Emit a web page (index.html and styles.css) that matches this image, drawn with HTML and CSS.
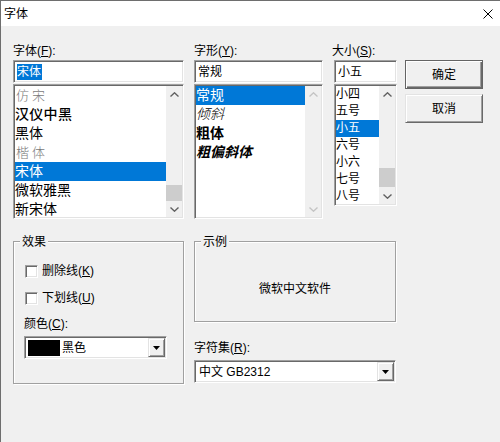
FILE: index.html
```html
<!DOCTYPE html>
<html lang="zh-CN">
<head>
<meta charset="utf-8">
<title>字体</title>
<link rel="stylesheet" href="styles.css">
</head>
<body>
<div class="window">
  <div class="titlebar">
    <span class="title">字体</span>
    <svg class="close" width="10" height="10" viewBox="0 0 10 10"><path d="M0.5 0.5L9.5 9.5M9.5 0.5L0.5 9.5" stroke="#000" stroke-width="1" fill="none"/></svg>
  </div>

  <div class="client">
    <div class="top">
      <!-- 字体 -->
      <div class="col col-font">
        <div class="lbl">字体(<u>F</u>):</div>
        <div class="edit sunken"><span class="sel">宋体</span></div>
        <div class="list list-tall sunken">
          <ul class="items">
            <li class="fang">仿宋</li>
            <li class="heavy">汉仪中黑</li>
            <li>黑体</li>
            <li class="kai">楷体</li>
            <li class="on">宋体</li>
            <li>微软雅黑</li>
            <li>新宋体</li>
          </ul>
          <div class="sbar">
            <div class="sbtn"><svg width="9" height="5" viewBox="0 0 9 5"><polyline points="0.5,4.5 4.5,0.8 8.5,4.5" fill="none" stroke="#606060" stroke-width="1.4"/></svg></div>
            <div class="track"><div class="thumb" style="margin-top:83px;height:16px"></div></div>
            <div class="sbtn"><svg width="9" height="5" viewBox="0 0 9 5"><polyline points="0.5,0.5 4.5,4.2 8.5,0.5" fill="none" stroke="#606060" stroke-width="1.4"/></svg></div>
          </div>
        </div>
      </div>

      <!-- 字形 -->
      <div class="col col-style">
        <div class="lbl">字形(<u>Y</u>):</div>
        <div class="edit sunken">常规</div>
        <div class="list list-tall sunken">
          <ul class="items">
            <li class="on">常规</li>
            <li class="it thin">倾斜</li>
            <li class="bd">粗体</li>
            <li class="bd it">粗偏斜体</li>
          </ul>
          <div class="sbar">
            <div class="sbtn"><svg width="9" height="5" viewBox="0 0 9 5"><polyline points="0.5,4.5 4.5,0.8 8.5,4.5" fill="none" stroke="#c4c4c4" stroke-width="1.4"/></svg></div>
            <div class="track"></div>
            <div class="sbtn"><svg width="9" height="5" viewBox="0 0 9 5"><polyline points="0.5,0.5 4.5,4.2 8.5,0.5" fill="none" stroke="#c4c4c4" stroke-width="1.4"/></svg></div>
          </div>
        </div>
      </div>

      <!-- 大小 -->
      <div class="col col-size">
        <div class="lbl lbl-size">大小(<u>S</u>):</div>
        <div class="edit sunken">小五</div>
        <div class="list list-short sunken">
          <ul class="items items-size">
            <li>小四</li>
            <li>五号</li>
            <li class="on">小五</li>
            <li>六号</li>
            <li>小六</li>
            <li>七号</li>
            <li>八号</li>
          </ul>
          <div class="sbar">
            <div class="sbtn"><svg width="9" height="5" viewBox="0 0 9 5"><polyline points="0.5,4.5 4.5,0.8 8.5,4.5" fill="none" stroke="#606060" stroke-width="1.4"/></svg></div>
            <div class="track"><div class="thumb" style="margin-top:66px;height:19px"></div></div>
            <div class="sbtn"><svg width="9" height="5" viewBox="0 0 9 5"><polyline points="0.5,0.5 4.5,4.2 8.5,0.5" fill="none" stroke="#606060" stroke-width="1.4"/></svg></div>
          </div>
        </div>
      </div>

      <!-- 按钮 -->
      <div class="col col-btns">
        <button class="btn btn-default" type="button">确定</button>
        <button class="btn" type="button">取消</button>
      </div>
    </div>

    <div class="bottom">
      <div class="group group-effects">
        <span class="gtitle">效果</span>
        <div class="check-row"><span class="check sunken"></span><span>删除线(<u>K</u>)</span></div>
        <div class="check-row check-row-2"><span class="check sunken"></span><span>下划线(<u>U</u>)</span></div>
        <div class="lbl lbl-color">颜色(<u>C</u>):</div>
        <div class="combo combo-color sunken">
          <span class="swatch"></span>
          <span class="combo-text">黑色</span>
          <span class="drop"><svg width="7" height="4" viewBox="0 0 7 4"><path d="M0 0H7L3.5 4Z" fill="#000"/></svg></span>
        </div>
      </div>

      <div class="col-right">
        <div class="group group-sample">
          <span class="gtitle">示例</span>
          <span class="sample">微软中文软件</span>
        </div>
        <div class="lbl lbl-charset">字符集(<u>R</u>):</div>
        <div class="combo combo-charset sunken">
          <span class="combo-text">中文 GB2312</span>
          <span class="drop"><svg width="7" height="4" viewBox="0 0 7 4"><path d="M0 0H7L3.5 4Z" fill="#000"/></svg></span>
        </div>
      </div>
    </div>
  </div>
</div>
</body>
</html>
```

FILE: styles.css
```css
* { box-sizing: border-box; }

html, body {
  margin: 0;
  padding: 0;
}

body {
  width: 500px;
  height: 442px;
  overflow: hidden;
  background: #f0f0f0;
  font-family: "Liberation Sans", "Noto Sans CJK SC", sans-serif;
  font-size: 12px;
  color: #000;
}

u { text-decoration-thickness: 1px; text-underline-offset: 1px; }

/* window frame */
.window {
  width: 500px;
  height: 442px;
  border-top: 1px solid #6e6e6e;
  border-left: 1px solid #6e6e6e;
  display: flex;
  flex-direction: column;
}

.titlebar {
  height: 25px;
  flex: none;
  background: #fff;
  display: flex;
  align-items: center;
  justify-content: space-between;
  padding: 0 7px 0 3px;
}

.title { line-height: 16px; }
.close { display: block; }

.client {
  flex: 1;
  padding: 17px 0 0 12px;
}

/* sunken 3D edge used by edits, lists, combos */
.sunken {
  background: #fff;
  border: 1px solid;
  border-color: #a0a0a0 #fff #fff #a0a0a0;
  box-shadow: inset 1px 1px 0 #696969, inset -1px -1px 0 #e3e3e3;
}

/* top row of pickers */
.top { display: flex; }

.col-font  { width: 171px; margin-right: 10px; }
.col-style { width: 129px; margin-right: 11px; }
.col-size  { width: 63px;  margin-right: 8px; }
.col-btns  { width: 78px; padding-top: 17px; display: flex; flex-direction: column; }

.lbl {
  height: 17px;
  line-height: 17px;
  white-space: nowrap;
}
.lbl-size { margin-left: -2px; }

.edit {
  height: 23px;
  padding: 3px 0 0 3px;
  line-height: 16px;
  white-space: nowrap;
}

.sel {
  display: inline-block;
  vertical-align: top;
  height: 16px;
  padding-right: 1px;
  background: #0078d7;
  color: #fff;
}

.list {
  margin-top: 1px;
  display: flex;
  padding: 1px;
  overflow: hidden;
}
.list-tall  { height: 135px; }
.list-short { height: 122px; }

.items {
  flex: 1;
  margin: 0;
  padding: 0;
  list-style: none;
  overflow: hidden;
  min-width: 0;
}

.items li {
  height: 19px;
  line-height: 19px;
  font-size: 14px;
  white-space: nowrap;
}

.items .on { background: #0078d7; color: #fff; }
.items .fang, .items .kai {
  color: #7a7a7a;
  font-weight: 300;
  letter-spacing: 3px;
  font-size: 13px;
  padding-left: 1px;
}
.items .heavy { font-weight: 500; letter-spacing: 0.3px; }
.items .it { font-style: italic; }
.items .thin { font-weight: 300; }
.items .bd { font-weight: 700; }

.items-size li {
  height: 17px;
  line-height: 17px;
  font-size: 12px;
}

/* scrollbar */
.sbar {
  width: 16px;
  flex: none;
  display: flex;
  flex-direction: column;
  background: #f0f0f0;
}
.sbtn {
  height: 16px;
  flex: none;
  display: flex;
  align-items: center;
  justify-content: center;
}
.sbtn svg { display: block; }
.track { flex: 1; min-height: 0; }
.thumb { background: #cdcdcd; }

/* push buttons */
.btn {
  height: 29px;
  width: 78px;
  margin: 0 0 5px 0;
  padding: 0;
  font: inherit;
  color: #000;
  background: #f0f0f0;
  border: 1px solid;
  border-color: #e3e3e3 #696969 #696969 #e3e3e3;
  box-shadow: inset 1px 1px 0 #fff, inset -1px -1px 0 #a0a0a0;
  line-height: 16px;
}
.btn-default {
  border-color: #646464;
  box-shadow: inset 1px 1px 0 #fff, inset -1px -1px 0 #696969, inset -2px -2px 0 #a0a0a0;
}

/* lower row */
.bottom {
  display: flex;
  margin-top: 22px;
}

.group {
  position: relative;
  border: 1px solid #a0a0a0;
  box-shadow: 1px 1px 0 #fff, inset 1px 1px 0 #fff;
}

.gtitle {
  position: absolute;
  top: -7px;
  left: 6px;
  padding: 0 2px;
  line-height: 14px;
  background: #f0f0f0;
}

.group-effects {
  width: 171px;
  height: 143px;
  margin-right: 10px;
  padding: 23px 0 0 10px;
}

.check-row {
  display: flex;
  align-items: center;
  height: 13px;
  line-height: 13px;
  white-space: nowrap;
}
.check-row-2 { margin-top: 14px; }

.check {
  width: 13px;
  height: 13px;
  margin: 0 4px 0 1px;
  flex: none;
}

.lbl-color {
  margin-top: 11px;
  height: 16px;
  line-height: 16px;
}

.combo {
  height: 23px;
  margin-top: 4px;
  display: flex;
  align-items: center;
  padding: 1px;
}

.combo-color { width: 143px; }
.combo-charset { width: 202px; }

.swatch {
  width: 32px;
  height: 16px;
  margin-left: 2px;
  background: #000;
  flex: none;
}

.combo-color .combo-text { margin-left: 2px; }
.combo-charset .combo-text { margin-left: 3px; }

.combo-text {
  flex: 1;
  line-height: 16px;
  white-space: nowrap;
}

.drop {
  width: 17px;
  height: 19px;
  flex: none;
  display: flex;
  align-items: center;
  justify-content: center;
  background: #f0f0f0;
  border: 1px solid;
  border-color: #e3e3e3 #696969 #696969 #e3e3e3;
  box-shadow: inset 1px 1px 0 #fff, inset -1px -1px 0 #a0a0a0;
}
.drop svg { display: block; }

.col-right {
  width: 202px;
}

.group-sample {
  height: 81px;
  display: flex;
  align-items: center;
  justify-content: center;
  padding-top: 14px;
}

.sample { line-height: 16px; }

.lbl-charset {
  margin-top: 18px;
  height: 16px;
  line-height: 16px;
}
```
